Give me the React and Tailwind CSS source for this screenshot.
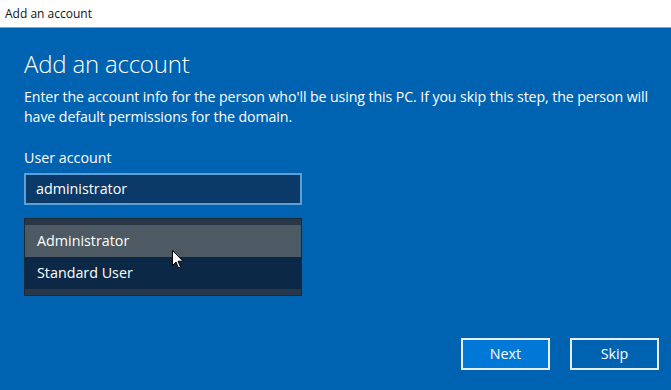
import React from 'react';

function Pointer() {
  return (
    <svg width="12" height="19" viewBox="0 0 12 19" className="absolute left-[147px] top-[31px]">
      <path d="M0.5 0.5 L0.5 15.5 L4 12 L6.5 18 L8.5 17 L6 11.2 L11 11.2 Z" fill="#fff" stroke="#000" strokeWidth="1" strokeLinejoin="round" />
    </svg>
  );
}

export default function App() {
  return (
    <div className="w-[671px] h-[390px] flex flex-col overflow-hidden" style={{ fontFamily: '"Open Sans", "Noto Sans", sans-serif' }}>
      <div className="h-[28px] bg-white flex items-center px-[5px] text-[12px] text-[#111] border-b border-[#7aa7d0]">
        Add an account
      </div>
      <div className="flex-1 bg-[#0063b1] text-white pl-[24px] pr-[12px] pt-[20px] flex flex-col">
        <h1 className="text-[24px] font-light leading-[32px] tracking-[-0.2px]">Add an account</h1>
        <p className="text-[14.2px] leading-[20px] mt-[7px] tracking-[-0.1px]">
          Enter the account info for the person who'll be using this PC. If you skip this step, the person will have default permissions for the domain.
        </p>
        <div className="text-[14.3px] mt-[21px] leading-[20px]">User account</div>
        <div className="mt-[5px] w-[278px] h-[32px] border-2 border-[#5e9fd6] bg-[#0b3a68] flex items-center px-[10px] text-[14.3px]">
          administrator
        </div>
        <div className="relative mt-[13px] w-[278px] border border-[#1c2a36] bg-[#283848] py-[6px] flex flex-col text-[14.3px]">
          <div className="h-[32px] bg-[#4d5963] flex items-center px-[12px]">Administrator</div>
          <div className="h-[32px] bg-[#0b2847] flex items-center px-[12px]">Standard User</div>
          <Pointer />
        </div>
        <div className="flex-1" />
        <div className="flex justify-end gap-[20px] pb-[20px] text-[14.3px]">
          <button className="w-[89px] h-[32px] border-2 border-[#e8eef5] bg-[#0078d7] text-white">Next</button>
          <button className="w-[89px] h-[32px] border-2 border-[#e8eef5] bg-transparent text-white">Skip</button>
        </div>
      </div>
    </div>
  );
}
